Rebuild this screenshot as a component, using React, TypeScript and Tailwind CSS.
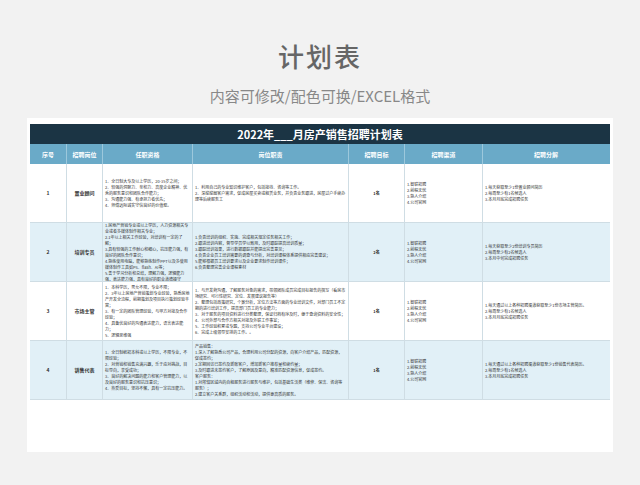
import React from "react";

const font = { fontFamily: '"Noto Sans CJK SC", "Noto Sans", sans-serif' };

const rows = [
  {
    no: "1",
    pos: "置业顾问",
    req: ["1、全日制大专及以上学历，20-35岁之间；", "2、较强的洞察力、亲和力、高度企业精神、优秀的服务意识和团队合作能力；", "3、沟通能力强、有承担力者优先；", "4、师傅远际诚实守信良好的价值观。"],
    duty: ["1、利用自己的专业知识维护客户，包括接待、咨询等工作。", "2、深挖挖掘客户需求，促成房屋买卖或租赁业务，并负责业务跟进，房屋过户手续办理等后续服务工"],
    target: "1名",
    dist: ["1.每天获取至少1份置业顾问简历", "2.每周至少有1名候选人", "3.本月月底完成招聘任务"],
    bg: "bg-white",
  },
  {
    no: "2",
    pos: "培训专员",
    req: ["1.房地产营销专业或以上学历，人力资源相关专业或者多媒体制作相关专业；", "2.1年以上相关工作经验，对培训有一定的了解；", "3.具有较强的工作耐心和细心，抗压能力强，有良好的团队合作意识；", "4.熟练使用电脑，能够熟练制作PPT以及多使用媒体制作工具如PS、flash、AI等；", "5.善于学习分析和总结，理解力强，逻辑能力强，表达能力强，具有良好的职业道德操守"],
    duty: ["1.负责培训的组织、实施、完成相关规定任务相关工作；", "2.跟进培训内容，督导学员学以致用，及时跟踪提高培训质量；", "3.跟踪培训效果，进行数据跟踪并能提出完善意见；", "4.负责企业员工培训需要的调查与分析，对培训课程体系提供相应完善建议；", "5.能够根据员工培训要求以及企业要求制作培训课件；", "6.负责整理完善企业课程素材"],
    target: "2名",
    dist: ["1.每天获取至少2份培训专员简历", "2.每周至少有2名候选人", "3.本月中旬完成招聘任务"],
    bg: "bg-[#e1f0f7]",
  },
  {
    no: "3",
    pos: "市场主管",
    req: ["1、本科学历，男女不限，专业不限；", "2、3年以上房地产营销策划专业经验，熟悉房地产开发全流程，前期策划及项目执行策划经验丰富；", "3、有一定的团队管理经验，与甲方对接及合作经验；", "4、具备优良好的沟通表达能力，语言表达能力；", "5、逻辑思维强"],
    duty: ["1、与开发商沟通，了解服务对象的需求，带领团队成员完成目标报告的撰写（看房市场研究、可行性研究、定位、发展建议报告等）", "2、整理包括政策研究，个案分析，定位方法等方面的专业培训文件，对部门员工不定期的进行培训工作，提高部门员工的专业能力；", "3、对于服务的项目资料进行分类整理，保证归档有序及时，便于查询资料的安全性；", "4、公司外部与合作方相关对接及外联工作事宜；", "5、工作经验积累或专题，支持公司专业平台建设；", "6、完成上级领导安排的工作。。"],
    target: "1名",
    dist: ["1.每天通过以上各种招聘渠道获取至少1份市场主管简历。", "2.每周至少有1名候选人", "3.本月月底完成招聘任务"],
    bg: "bg-white",
  },
  {
    no: "4",
    pos: "销售代表",
    req: ["1、全日制统招本科或以上学历，不限专业，不限经验；", "2、对营销和销售充满兴趣，乐于应对挑战，目标导向，享受成功；", "3、良好的解决问题的能力和客户管理能力，以及良好的服务意识和抗压意识；", "4、热爱目标，坚持不懈，具有一定抗压能力。"],
    duty: ["产品销售：", "1.深入了解熟悉公司产品，合理利用公司分配的资源，向客户介绍产品，匹配资源，促成签约；", "2.定期回访已签约及新账客户，增加新客户推荐量和续约量；", "3.及时跟进未签约客户，了解原因及意向，精准匹配资源信息，促成签约。", "客户服务：", "1.对所辖区域内的自租服务进行服务与维护，包括基础生活类（维修、保洁、咨询等服务）；", "2.建立客户关系群，组织活动和活动，提供更高质的服务。"],
    target: "1名",
    dist: ["1.每天通过以上各种招聘渠道获取至少1份销售代表简历。", "2.每周至少有1名候选人", "3.本月月底完成招聘任务"],
    bg: "bg-[#e1f0f7]",
  },
];

const channels = ["1.智联招聘", "2.前程无忧", "3.熟人介绍", "4.公司官网"];
const cols = "grid grid-cols-[37px_36px_90px_156px_56px_78px_126px]";

export default function App() {
  return (
    <div className="w-[640px] h-[485px] bg-[#f2f2f2] flex flex-col items-center" style={font}>
      <h1 className="mt-[38px] text-[26px] font-medium text-[#666] tracking-[2px] leading-[36px]">计划表</h1>
      <p className="mt-[12px] text-[15px] text-[#888] leading-[20px]">内容可修改/配色可换/EXCEL格式</p>
      <div className="mt-[12px] w-[586px] bg-white px-[3px] pt-[6px] pb-[52px]">
        <div className="bg-[#1b3444] h-[20px] flex items-center justify-center text-white text-[11px] font-bold">2022年___月房产销售招聘计划表</div>
        <div className={`${cols} h-[20px] bg-[#6aaac8] text-white text-[6px] font-bold`}>
          {["序号", "招聘岗位", "任职资格", "岗位职责", "招聘目标", "招聘渠道", "招聘分解"].map((h) => (
            <div key={h} className="flex items-center justify-center border-r border-[#9cc8dc] last:border-r-0">{h}</div>
          ))}
        </div>
        {rows.map((r) => (
          <div key={r.no} className={`${cols} ${r.bg} h-[59px] text-[4px] leading-[6px] text-[#333] border-b border-[#cfdde4]`}>
            <div className="flex items-center justify-center text-[5px] font-bold border-r border-[#cfdde4]">{r.no}</div>
            <div className="flex items-center justify-center text-[5px] font-bold border-r border-[#cfdde4]">{r.pos}</div>
            <div className="flex flex-col justify-center px-[2px] overflow-hidden border-r border-[#cfdde4]">{r.req.map((t) => <div key={t}>{t}</div>)}</div>
            <div className="flex flex-col justify-center px-[2px] overflow-hidden border-r border-[#cfdde4]">{r.duty.map((t) => <div key={t}>{t}</div>)}</div>
            <div className="flex items-center justify-center font-bold border-r border-[#cfdde4]">{r.target}</div>
            <div className="flex flex-col justify-center px-[2px] border-r border-[#cfdde4]">{channels.map((t) => <div key={t}>{t}</div>)}</div>
            <div className="flex flex-col justify-center px-[2px]">{r.dist.map((t) => <div key={t}>{t}</div>)}</div>
          </div>
        ))}
      </div>
    </div>
  );
}
